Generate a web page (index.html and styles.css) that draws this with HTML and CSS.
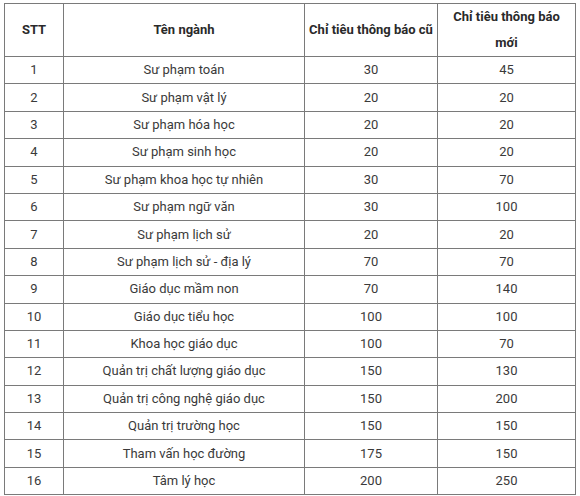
FILE: index.html
```html
<!DOCTYPE html>
<html lang="vi">
<head>
<meta charset="utf-8">
<link rel="stylesheet" href="styles.css">
</head>
<body>
<table class="quota">
  <colgroup>
    <col class="c-stt"><col class="c-name"><col class="c-old"><col class="c-new">
  </colgroup>
  <thead>
    <tr><th>STT</th><th>Tên ngành</th><th>Chỉ tiêu thông báo cũ</th><th>Chỉ tiêu thông báo mới</th></tr>
  </thead>
  <tbody>
    <tr><td>1</td><td>Sư phạm toán</td><td>30</td><td>45</td></tr>
    <tr><td>2</td><td>Sư phạm vật lý</td><td>20</td><td>20</td></tr>
    <tr><td>3</td><td>Sư phạm hóa học</td><td>20</td><td>20</td></tr>
    <tr><td>4</td><td>Sư phạm sinh học</td><td>20</td><td>20</td></tr>
    <tr><td>5</td><td>Sư phạm khoa học tự nhiên</td><td>30</td><td>70</td></tr>
    <tr><td>6</td><td>Sư phạm ngữ văn</td><td>30</td><td>100</td></tr>
    <tr><td>7</td><td>Sư phạm lịch sử</td><td>20</td><td>20</td></tr>
    <tr><td>8</td><td>Sư phạm lịch sử - địa lý</td><td>70</td><td>70</td></tr>
    <tr><td>9</td><td>Giáo dục mầm non</td><td>70</td><td>140</td></tr>
    <tr><td>10</td><td>Giáo dục tiểu học</td><td>100</td><td>100</td></tr>
    <tr><td>11</td><td>Khoa học giáo dục</td><td>100</td><td>70</td></tr>
    <tr><td>12</td><td>Quản trị chất lượng giáo dục</td><td>150</td><td>130</td></tr>
    <tr><td>13</td><td>Quản trị công nghệ giáo dục</td><td>150</td><td>200</td></tr>
    <tr><td>14</td><td>Quản trị trường học</td><td>150</td><td>150</td></tr>
    <tr><td>15</td><td>Tham vấn học đường</td><td>175</td><td>150</td></tr>
    <tr><td>16</td><td>Tâm lý học</td><td>200</td><td>250</td></tr>
  </tbody>
</table>
</body>
</html>
```
FILE: styles.css
```css
html, body {
  margin: 0;
  padding: 0;
  background: #ffffff;
}
body {
  padding: 3px 0 0 4px;
  font-family: Roboto, "Noto Sans", sans-serif;
  color: #3a3a3a;
}
.quota {
  border-collapse: collapse;
  table-layout: fixed;
  width: 571px;
  font-size: 13px;
}
.c-stt { width: 59px; }
.c-name { width: 241px; }
.c-old { width: 133px; }
.c-new { width: 138px; }
.quota th, .quota td {
  border: 1px solid #7a7a7a;
  text-align: center;
  vertical-align: middle;
  padding: 0 4px;
}
.quota th {
  height: 50px;
  font-weight: bold;
  line-height: 26px;
  color: #2a2a2a;
}
.quota td {
  height: 26.4px;
  line-height: 16px;
}
```
